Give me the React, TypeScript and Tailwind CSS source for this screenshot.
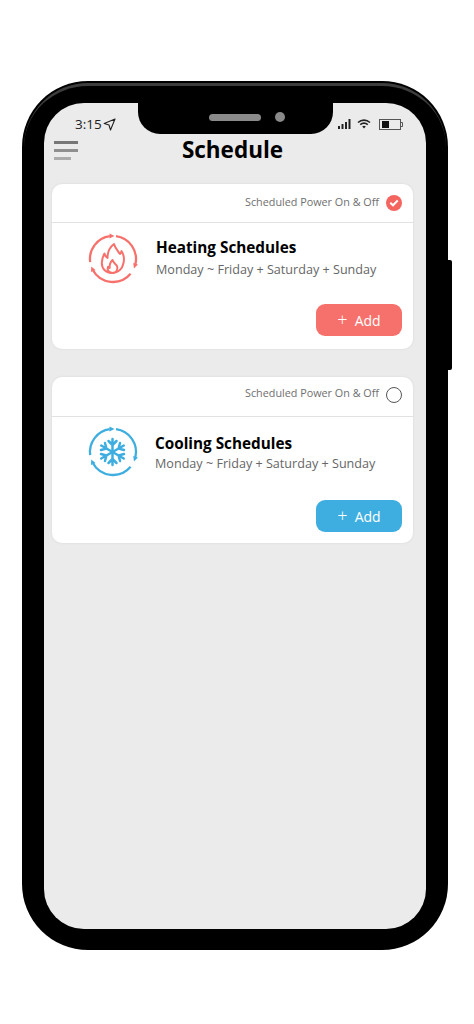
import React from "react";

function CycleRing({ color }: { color: string }) {
  return (
    <g fill="none" stroke={color} strokeWidth="2.3">
      <path d="M3.2 29.2A23 23 0 0 1 22.8 3.2" />
      <path d="M29 3.200A23 23 0 0 1 48.400 31.200" />
      <path d="M43.600 40.800A23 23 0 0 1 5.700 36.800" />
      <path d="M27.500 3.100L22.500 0.600V5.600Z" fill={color} stroke="none" />
      <path d="M47 35.400L50.900 31.400L46.200 29.900Z" fill={color} stroke="none" />
      <path d="M4.200 33.500L8.600 36.900L4 39.100Z" fill={color} stroke="none" />
    </g>
  );
}

function FlameIcon() {
  return (
    <svg width="52" height="52" viewBox="0 0 52 52" className="shrink-0">
      <CycleRing color="#f7716c" />
      <g fill="none" stroke="#f7716c" strokeWidth="2" strokeLinejoin="round">
        <path d="M27 11C28 15 31 18 33 21C34 20 34.500 19 34.500 18C37 22 37.200 27 36.500 30C35.500 36 31 40 25 40C19 40 14.800 36 14.800 30C14.800 26 16 23 17.500 20.500C18 22.500 19 24 20.500 25C20.500 19 23 14 27 11Z" />
        <path d="M25.500 27C26 29.500 28.500 30.500 30 33C31.300 36 29.500 40 25.500 40C21.500 40 19.800 36.500 21 33.800C21.400 34.400 22 34.800 22.700 35C22.300 32 23.500 29 25.500 27Z" />
      </g>
    </svg>
  );
}

function SnowIcon() {
  const arm = "M25.500 13V39M25.500 19L21.500 15M25.500 19L29.500 15M25.500 33L21.500 37M25.500 33L29.500 37";
  return (
    <svg width="52" height="52" viewBox="0 0 52 52" className="shrink-0">
      <CycleRing color="#3eaee0" />
      <g fill="none" stroke="#3eaee0" strokeWidth="2.500" strokeLinecap="round">
        <path d={arm} />
        <path d={arm} transform="rotate(60 25.500 26)" />
        <path d={arm} transform="rotate(120 25.500 26)" />
      </g>
    </svg>
  );
}

function Card({
  title,
  icon,
  checked,
  button,
  headClass,
  labelClass,
  bodyClass,
  textClass,
  subClass,
}: {
  title: string;
  icon: React.ReactNode;
  checked: boolean;
  button: string;
  headClass: string;
  labelClass: string;
  bodyClass: string;
  textClass: string;
  subClass: string;
}) {
  return (
    <section className="h-full w-[361px] rounded-[10px] bg-white shadow-[0_0_3px_rgba(0,0,0,0.08)]">
      <div className={`flex items-center justify-end gap-[7px] border-b border-[#e2e2e2] pr-[11px] ${headClass}`}>
        <span className={`text-[10.800px] text-[#6f6f6f] ${labelClass}`}>Scheduled Power On &amp; Off</span>
        {checked ? (
          <span className="flex h-4 w-4 items-center justify-center rounded-full bg-[#f4655f]">
            <svg width="10" height="8" viewBox="0 0 10 8">
              <path d="M1.300 3.800L4 6.300L8.700 1.500" fill="none" stroke="#fff" strokeWidth="2" />
            </svg>
          </span>
        ) : (
          <span className="h-4 w-4 rounded-full border border-[#555]" />
        )}
      </div>
      <div className={`flex items-start pl-[35px] ${bodyClass}`}>
        {icon}
        <div className={textClass}>
          <h2 className="text-[15.300px] leading-[22px] font-bold text-black">{title}</h2>
          <p className={`text-[12.600px] leading-[20px] text-[#666] ${subClass}`}>
            Monday ~ Friday + Saturday + Sunday
          </p>
        </div>
      </div>
      <div className="flex justify-end pr-[11px]">
        <button
          className={`flex h-[32px] w-[86px] items-center justify-center gap-[7px] rounded-[9px] text-[14px] text-white ${button}`}
        >
          <span className="relative -top-[1px] text-[18px] leading-none font-light">+</span>
          <span>Add</span>
        </button>
      </div>
    </section>
  );
}

export default function App() {
  return (
    <div
      className="h-[1024px] w-[474px] overflow-hidden bg-white pt-[81px] pl-[22px]"
      style={{ fontFamily: '"Open Sans", sans-serif' }}
    >
      <div className="relative h-[869px] w-[426px] rounded-[66px] bg-black p-[22px]">
        <div className="absolute top-[179px] -right-[4px] h-[110px] w-[4px] rounded-r-[2px] bg-black" />
        <div className="absolute top-[2px] right-[2px] left-[2px] h-[90px] rounded-t-[64px] border-t-[3px] border-[#3d3d3d]" />
        <div className="relative h-[826px] w-[382px] rounded-[40px] bg-[#ebebeb]">
          <div className="absolute top-0 left-[94px] flex h-[31px] w-[195px] items-center justify-center gap-[14px] rounded-b-[22px] bg-black pb-[3px] pl-[23px]">
            <span className="h-[7px] w-[52px] rounded-full bg-[#8a8a8a]" />
            <span className="h-[10px] w-[10px] rounded-full bg-[#8a8a8a]" />
          </div>

          <header className="box-content flex h-[22px] items-center justify-between pt-[10px] pr-[23px] pl-[31px]">
            <div className="flex items-center gap-[1px] text-[13.500px] text-[#222]">
              <span>3:15</span>
              <svg width="13" height="13" viewBox="0 0 13 13">
                <path d="M12 1L1.200 5.500L6 7L7.500 12Z" fill="none" stroke="#222" strokeWidth="1.100" strokeLinejoin="round" />
              </svg>
            </div>
            <div className="flex items-center gap-[6px]">
              <svg width="13" height="10" viewBox="0 0 13 10">
                <path d="M0 7h2v3H0zM3.500 5h2v5h-2zM7 3h2v7H7zM10.500 0h2v10h-2z" fill="#222" />
              </svg>
              <svg width="14" height="10" viewBox="0 0 14 10">
                <path d="M1 3.500C4.500 0.300 9.500 0.300 13 3.500M3.200 5.700C5.500 3.700 8.500 3.700 10.800 5.700" fill="none" stroke="#222" strokeWidth="1.600" />
                <path d="M5.200 7.400C6.300 6.500 7.700 6.500 8.800 7.400L7 9.500Z" fill="#222" />
              </svg>
              <svg width="24" height="11" viewBox="0 0 24 11" className="ml-[2px]">
                <rect x="0.500" y="0.500" width="21" height="10" fill="none" stroke="#555" />
                <rect x="3" y="2" width="7" height="7" fill="#111" />
                <path d="M22 3.500h1.500v4H22" fill="none" stroke="#555" />
              </svg>
            </div>
          </header>

          <div className="relative flex h-[30px] items-center justify-center pr-[5px]">
            <div className="absolute top-[6px] left-[10px] flex w-[24px] flex-col gap-[5px]">
              <span className="h-[3px] w-[24px] bg-[#777]" />
              <span className="h-[3px] w-[24px] bg-[#8f8f8f]" />
              <span className="h-[3px] w-[17px] bg-[#ababab]" />
            </div>
            <h1 className="text-[22.500px] leading-none font-bold text-black">Schedule</h1>
          </div>

          <div className="flex flex-col gap-[28px] pt-[19px] pl-[8px]">
            <div className="h-[165px]">
              <Card
                title="Heating Schedules"
                icon={<FlameIcon />}
                checked
                button="bg-[#f7716c]"
                headClass="h-[39px]"
                labelClass="mb-[2px]"
                bodyClass="h-[81px] pt-[10px]"
                textClass="pl-[17px] pt-[3px]"
                subClass="mt-[2px]"
              />
            </div>
            <div className="h-[166px]">
              <Card
                title="Cooling Schedules"
                icon={<SnowIcon />}
                checked={false}
                button="bg-[#3eaee0]"
                headClass="h-[40px] pb-[3px]"
                labelClass="mb-[3px]"
                bodyClass="h-[83px] pt-[9px]"
                textClass="pl-[16px] pt-[6px]"
                subClass="mt-0"
              />
            </div>
          </div>
        </div>
      </div>
    </div>
  );
}
